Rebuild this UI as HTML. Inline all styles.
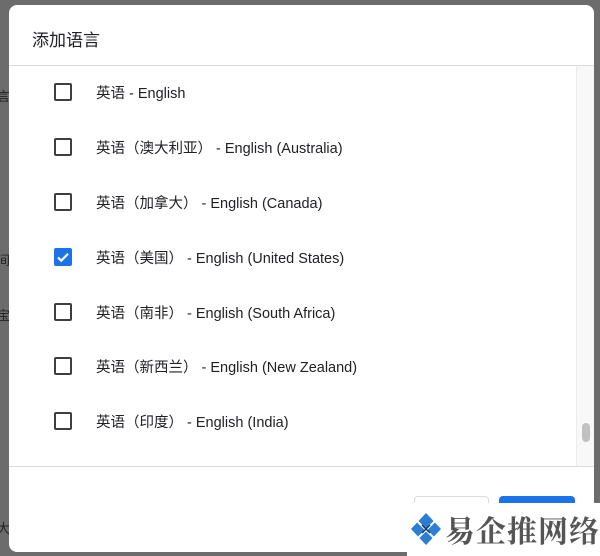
<!DOCTYPE html>
<html><head><meta charset="utf-8"><style>
*{margin:0;padding:0;box-sizing:border-box}
body{width:600px;height:556px;overflow:hidden;background:#6c6c6c;position:relative;font-family:"Liberation Sans","Noto Sans CJK SC",sans-serif}
.bgtxt{position:absolute;left:-3px;color:#222;font-size:13px}
.dlg{position:absolute;left:9px;top:5px;width:585px;height:547px;background:#fff;border-radius:8px;overflow:hidden}
.hd{position:absolute;left:23px;top:21px;font-size:17px;color:#202124}
.line1{position:absolute;left:0;right:0;top:60px;height:1px;background:#dadce0}
.line2{position:absolute;left:0;right:0;top:461px;height:1px;background:#dadce0}
.sb{position:absolute;left:567px;top:61px;width:18px;height:400px;background:#f8f8f8;border-left:1px solid #ececec}
.th{position:absolute;left:573px;top:418px;width:8px;height:19px;background:#c1c1c1;border-radius:4px}
.row{position:absolute;left:45px;height:20px;display:flex;align-items:center;white-space:nowrap}
.cb{width:18px;height:18px;border:2px solid #3c4043;border-radius:2px;margin-right:24px;flex:none}
.cb.on{background:#1a73e8;border-color:#1a73e8;display:flex;align-items:center;justify-content:center}
.lb{font-size:14.5px;color:#202124}
.btn1{position:absolute;left:405px;top:491px;width:75px;height:40px;border:1px solid #dadce0;border-radius:4px}
.btn2{position:absolute;left:490px;top:491px;width:76px;height:40px;background:#1a73e8;border-radius:4px}
.wm{position:absolute;left:407px;top:503px;width:193px;height:53px;background:#fff;overflow:hidden}
.wm span{position:absolute;left:38px;top:7px;font-size:30px;font-weight:bold;color:#555;white-space:nowrap;font-family:"Noto Serif CJK SC","Noto Sans CJK SC",serif;letter-spacing:1px;line-height:38px}
</style></head><body>
<div class="bgtxt" style="top:86px">言</div>
<div class="bgtxt" style="top:250px">间</div>
<div class="bgtxt" style="top:305px">宝</div>
<div class="bgtxt" style="top:518px">大</div>
<div class="dlg">
<div class="hd">添加语言</div>
<div class="line1"></div>
<div class="row" style="top:77px"><div class="cb"></div><div class="lb">英语 - English</div></div>
<div class="row" style="top:132px"><div class="cb"></div><div class="lb">英语（澳大利亚） - English (Australia)</div></div>
<div class="row" style="top:187px"><div class="cb"></div><div class="lb">英语（加拿大） - English (Canada)</div></div>
<div class="row" style="top:242px"><div class="cb on"><svg width="14" height="14" viewBox="0 0 14 14"><path d="M2 7.5l3.2 3.2L12 3.8" stroke="#fff" stroke-width="2.2" fill="none"/></svg></div><div class="lb">英语（美国） - English (United States)</div></div>
<div class="row" style="top:297px"><div class="cb"></div><div class="lb">英语（南非） - English (South Africa)</div></div>
<div class="row" style="top:351px"><div class="cb"></div><div class="lb">英语（新西兰） - English (New Zealand)</div></div>
<div class="row" style="top:406px"><div class="cb"></div><div class="lb">英语（印度） - English (India)</div></div>
<div class="sb"></div><div class="th"></div>
<div class="line2"></div>
<div class="btn1"></div><div class="btn2"></div>
</div>
<div class="wm">
<svg style="position:absolute;left:2px;top:8px" width="34" height="36" viewBox="0 0 34 36"><path d="M17 2L32 18L17 34L2 18Z" fill="#2a7fd4"/><path d="M8 10L26 28M26 10L8 28" stroke="#fff" stroke-width="2"/><path d="M13 14L21 22M21 14L13 22" stroke="#1a3a6a" stroke-width="1.5"/></svg>
<span>易企推网络</span>
</div>
</body></html>
